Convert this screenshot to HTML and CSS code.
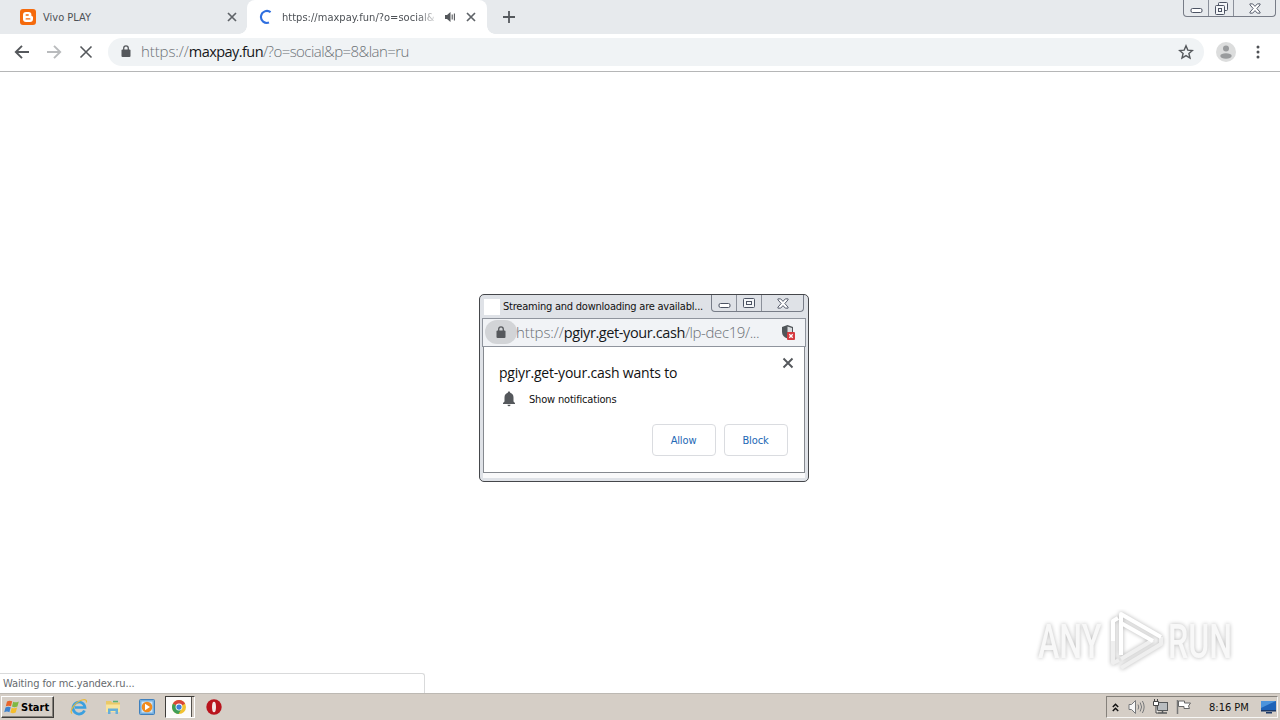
FILE: index.html
```html
<!DOCTYPE html>
<html lang="en">
<head>
    <meta charset="UTF-8">
    <meta name="viewport" content="width=device-width, initial-scale=1.0">
    <title>https://maxpay.fun/?o=social&amp;p=8&amp;lan=ru</title>
    <link rel="stylesheet" href="styles.css">
</head>
<body>
    <div class="tab-strip">
        <div class="tab">
            <svg class="favicon" width="16" height="16" viewBox="0 0 16 16">
                <rect width="16" height="16" rx="3" fill="#f56a0c"/>
                <path d="M6 3h2.7a2.7 2.7 0 0 1 2.7 2.7v.8c0 .5.3.7.8.7.5 0 .8.3.8.8v2A3 3 0 0 1 10 13H6a3 3 0 0 1-3-3V6a3 3 0 0 1 3-3z" fill="#fff"/>
                <path d="M6.2 6h2M6.2 9.9h3.6" stroke="#f56a0c" stroke-width="1.4" stroke-linecap="round"/>
            </svg>
            <span class="tab-title">Vivo PLAY</span>
            <svg class="tab-close" width="10" height="10" viewBox="0 0 10 10"><path d="M1 1l8 8M9 1L1 9" stroke="#5f6368" stroke-width="1.7"/></svg>
        </div>
        <div class="tab active">
            <svg class="favicon" width="16" height="16" viewBox="0 0 16 16">
                <path d="M12.6 3.2A6 6 0 1 0 11 13.6" fill="none" stroke="#2f6fdf" stroke-width="2.1"/>
            </svg>
            <span class="tab-title loading">https://maxpay.fun/?o=social&amp;</span>
            <svg class="audio" width="12" height="12" viewBox="0 0 12 12">
                <path d="M1 4h2l3.5-3v10L3 8H1z" fill="#55585c"/>
                <path d="M8.2 3.5v5M10.4 2.5v7" stroke="#55585c" stroke-width="1.1"/>
            </svg>
            <svg class="tab-close" width="10" height="10" viewBox="0 0 10 10"><path d="M1 1l8 8M9 1L1 9" stroke="#5f6368" stroke-width="1.7"/></svg>
        </div>
        <svg class="new-tab" width="12" height="12" viewBox="0 0 12 12"><path d="M6 0v12M0 6h12" stroke="#55595d" stroke-width="1.8"/></svg>
        <div class="caption-buttons">
            <span class="min"><svg width="13" height="6" viewBox="0 0 13 6"><rect x="1" y=".5" width="11" height="4" rx="1.5" fill="#fff" stroke="#4c5363"/></svg></span>
            <span class="max"><svg width="13" height="13" viewBox="0 0 13 13" fill="#f4f6f8" stroke="#4c5363"><rect x="3.5" y=".5" width="9" height="8" rx="1"/><rect x=".5" y="3.5" width="9" height="9" rx="1"/><rect x="3.5" y="6.5" width="3" height="3"/></svg></span>
            <span class="close"><svg width="12" height="11" viewBox="0 0 13 11"><path d="M1 .5h3l2.5 2.7L9 .5h3v1L8.5 5.5 12 9.5v1H9L6.5 7.8 4 10.5H1v-1l3.5-4L1 1.5z" fill="#fff" stroke="#4c5363"/></svg></span>
        </div>
    </div>

    <div class="toolbar">
        <svg width="16" height="16" viewBox="0 0 16 16"><path d="M15 8H2M8 1.8L1.8 8 8 14.2" fill="none" stroke="#55585c" stroke-width="1.9"/></svg>
        <svg width="16" height="16" viewBox="0 0 16 16"><path d="M1 8h13M8 1.8L14.2 8 8 14.2" fill="none" stroke="#b9bbbd" stroke-width="1.9"/></svg>
        <svg width="16" height="16" viewBox="0 0 16 16"><path d="M2.5 2.5l11 11M13.5 2.5l-11 11" stroke="#55585c" stroke-width="1.6"/></svg>
        <div class="omnibox">
            <svg class="lock" width="10" height="13" viewBox="0 0 10 13"><rect x=".5" y="4.5" width="9" height="7.5" rx="1" fill="#55585c"/><path d="M2.7 5V3.2a2.3 2.3 0 0 1 4.6 0V5" fill="none" stroke="#55585c" stroke-width="1.3"/></svg>
            <span class="url main-url">https://<b>maxpay.fun</b><span class="path">/?o=social&amp;p=8&amp;lan=ru</span></span>
            <svg class="star" width="16" height="16" viewBox="0 0 16 16"><path d="M8 1.8l1.8 4.3 4.6.4-3.5 3 1.1 4.5L8 11.6 4 14l1.100-4.500-3.500-3 4.600-.4z" fill="none" stroke="#55585c" stroke-width="1.4"/></svg>
        </div>
        <svg class="avatar" width="20" height="20" viewBox="0 0 20 20"><circle cx="10" cy="10" r="10" fill="#dcdddd"/><circle cx="10" cy="6.5" r="3" fill="#999b9d"/><ellipse cx="10" cy="14" rx="5.7" ry="2.7" fill="#999b9d"/></svg>
        <svg class="menu" width="4" height="14" viewBox="0 0 4 14" fill="#4e5155"><circle cx="2" cy="2" r="1.5"/><circle cx="2" cy="7" r="1.5"/><circle cx="2" cy="12" r="1.5"/></svg>
    </div>

    <div class="page">
        <div class="popup">
            <div class="popup-title">
                <span class="blank-icon"></span>
                <span class="popup-name">Streaming and downloading are availabl...</span>
                <div class="caption-buttons">
                    <span class="min"><svg width="13" height="6" viewBox="0 0 13 6"><rect x="1" y=".5" width="11" height="4" rx="1.5" fill="#fff" stroke="#4c5363"/></svg></span>
                    <span class="max"><svg width="12" height="10" viewBox="0 0 12 10" fill="#f4f6f8" stroke="#4c5363"><rect x=".5" y=".5" width="11" height="9" rx="1"/><rect x="3.5" y="3.5" width="5" height="3"/></svg></span>
                    <span class="close"><svg width="12" height="11" viewBox="0 0 13 11"><path d="M1 .5h3l2.5 2.7L9 .5h3v1L8.5 5.5 12 9.5v1H9L6.5 7.8 4 10.5H1v-1l3.5-4L1 1.5z" fill="#fff" stroke="#4c5363"/></svg></span>
                </div>
            </div>
            <div class="popup-bar">
                <span class="lock-chip"><svg width="10" height="13" viewBox="0 0 10 13"><rect x=".5" y="4.5" width="9" height="7.5" rx="1" fill="#55585c"/><path d="M2.7 5V3.2a2.3 2.3 0 0 1 4.6 0V5" fill="none" stroke="#55585c" stroke-width="1.3"/></svg></span>
                <span class="url popup-url">https://<b>pgiyr.get-your.cash</b><span class="path">/lp-dec19/...</span></span>
                <svg class="shield" width="14" height="15" viewBox="0 0 14 15">
                    <path d="M6.5 0L12 2v5c0 3-2.500 5.500-5.500 6.500C3 12.500 1 10 1 7V2z" fill="#505559"/>
                    <path d="M6.500 1.500L11 3v4H6.500z" fill="#d9dcdf"/>
                    <rect x="6" y="7" width="8" height="8" rx="1" fill="#d63a40"/>
                    <path d="M8.300 9.300l3.400 3.400M11.700 9.300l-3.400 3.400" stroke="#fff" stroke-width="1.3"/>
                </svg>
            </div>
            <div class="prompt">
                <div class="prompt-head">
                    <span class="prompt-title">pgiyr.get-your.cash wants to</span>
                    <svg width="12" height="12" viewBox="0 0 12 12"><path d="M1.5 1.5l9 9M10.5 1.5l-9 9" stroke="#55585c" stroke-width="1.9"/></svg>
                </div>
                <div class="permission">
                    <svg width="14" height="16" viewBox="0 0 14 16"><path d="M7 .5c.8 0 1.2.5 1.2 1.3C10.4 2.4 11.5 4.3 11.5 6.5v4L13 12v1H1v-1l1.5-1.5v-4c0-2.2 1.1-4.1 3.3-4.7C5.8 1 6.2.5 7 .5zM5.5 13.8h3a1.5 1.5 0 0 1-3 0z" fill="#55585c"/></svg>
                    <span class="permission-name">Show notifications</span>
                </div>
                <div class="prompt-buttons">
                    <button class="allow">Allow</button>
                    <button class="block">Block</button>
                </div>
            </div>
        </div>

        <div class="watermark">
            <span class="any">ANY</span>
            <svg width="60" height="64" viewBox="0 0 60 64" fill="none" stroke-linejoin="round">
                <g class="arrow">
                    <path class="shade" d="M6 30v24l6-3M14 59l40-24v-7M14 50l32-19"/>
                    <path d="M6 32V12l5-3M14 46V5l40 23M14 14l32 18"/>
                </g>
            </svg>
            <span class="run">RUN</span>
        </div>

        <div class="status"><span>Waiting for mc.yandex.ru...</span></div>
    </div>

    <div class="taskbar">
        <div class="start">
            <svg width="17" height="16" viewBox="0 0 17 16">
                <path d="M3 2.5c2-1.2 3.5-1 5.2-.2L7 7.3c-1.7-.8-3.3-.8-5.2 0z" fill="#e8652b"/>
                <path d="M9.2 2.7c1.8.8 3.5.8 5.6-.3l-1.4 5c-1.9 1-3.6 1-5.4.2z" fill="#7fb842"/>
                <path d="M1.5 8.4c1.9-.9 3.5-.9 5.2-.1l-1.3 4.9c-1.6-.8-3.3-.8-5.2.1z" fill="#3d82ce"/>
                <path d="M7.7 8.7c1.8.8 3.5.8 5.4-.2l-1.4 5c-1.9 1-3.5 1-5.3.1z" fill="#f4bd2c"/>
            </svg>
            <span>Start</span>
        </div>
        <div class="launch">
            <svg class="ie" width="18" height="18" viewBox="0 0 18 18">
                <path d="M14.5 12.5A6 6 0 1 1 15 9.5H5" fill="none" stroke="#3ba0df" stroke-width="2.7"/>
                <path d="M2 15.5C-1 13 5 4 12 2c3.5-1 5 0 4.3 2.5" fill="none" stroke="#e8b93a" stroke-width="1.2"/>
            </svg>
            <svg class="folder" width="16" height="16" viewBox="0 0 16 16">
                <path d="M1 2h5l1 1.5h8V13H1z" fill="#eac967"/><path d="M1 5.5h14V13H1z" fill="#f8e49d"/>
                <path d="M3 15V9.5h10V15h-2.5v-3h-5v3z" fill="#67afd9"/><path d="M8 2.5h5" stroke="#5ab175" stroke-width="1.5"/>
            </svg>
            <svg class="player" width="16" height="16" viewBox="0 0 16 16">
                <rect x=".5" y=".5" width="15" height="15" rx="1" fill="#75afdf" stroke="#3f80bd"/><rect x="2.5" y="2.5" width="11" height="11" fill="#cce3f5"/>
                <circle cx="8" cy="8" r="5.3" fill="#f18b1c"/><path d="M6 4.8v6.4L11 8z" fill="#fff"/>
            </svg>
            <span class="running">
                <svg width="14" height="14" viewBox="0 0 16 16">
                    <circle cx="8" cy="8" r="8" fill="#f2c230"/><path d="M8 8L1 4.2A8 8 0 0 1 15 4.2z" fill="#d8463a"/><path d="M1 4.2A8 8 0 0 0 7.5 16L11 9.7 8 8z" fill="#3f9e57"/>
                    <circle cx="8" cy="8" r="3.9" fill="#fff"/><circle cx="8" cy="8" r="3" fill="#3d7fdb"/>
                </svg>
            </span>
            <svg class="opera" width="16" height="16" viewBox="0 0 16 16"><circle cx="8" cy="8" r="7.7" fill="#b9141d"/><ellipse cx="8" cy="8" rx="2" ry="5.3" fill="#f3e6e6"/></svg>
        </div>
        <div class="tray">
            <svg class="chevrons" width="7" height="9" viewBox="0 0 7 9"><path d="M.8 4l2.7-2.7L6.2 4M.8 8l2.7-2.7L6.2 8" fill="none" stroke="#111" stroke-width="1.5"/></svg>
            <svg class="volume" width="17" height="16" viewBox="0 0 17 16" fill="none" stroke="#77797b"><path d="M1 5.5h2.5l4-4v13l-4-4H1z" fill="#f7f7f7"/><path d="M10 5.5q1.5 2.5 0 5M12.2 3.5q2.8 4.5 0 9M14.4 2q3.5 6 0 12"/></svg>
            <svg class="network" width="17" height="16" viewBox="0 0 17 16"><rect x="5.5" y="3.5" width="10" height="8" fill="#b9bdc0" stroke="#55585a"/><path d="M6 14h9M10.5 12v2" stroke="#55585a" stroke-width="1.5"/><path d="M1.5 2.5h5v4h-5zM2.5 0v2.5M5.5 0v2.5M4 6.5V14h2" fill="#fff" stroke="#444"/></svg>
            <svg class="flag" width="17" height="16" viewBox="0 0 17 16"><path d="M1.5 1v14" stroke="#777" stroke-width="1.5"/><path d="M2.5 2h6v2h6l-2 3 1 2.5H8v-2H2.5z" fill="#fff" stroke="#666"/></svg>
            <span class="clock">8:16 PM</span>
            <svg class="desktop" width="16" height="14" viewBox="0 0 16 14"><path d="M0 1h15v9.5H0z" fill="#1e63b8"/><path d="M0 1h15L0 8z" fill="#4c94dc"/><path d="M0 10h15v1.5H0zM5 12h6v1.5H5z" fill="#1b3968"/></svg>
        </div>
    </div>
</body>
</html>
```
FILE: styles.css
```css
* {
    box-sizing: border-box;
}
body {
    margin: 0;
    width: 1280px;
    height: 720px;
    overflow: hidden;
    display: flex;
    flex-direction: column;
    background-color: #fff;
    color: #111;
    font-family: "DejaVu Sans Condensed", "DejaVu Sans", sans-serif;
    font-size: 11px;
    white-space: nowrap;
}
svg {
    display: block;
    flex: none;
}
.tab-strip {
    height: 34px;
    display: flex;
    align-items: flex-start;
    background-color: #e7eaed;
}
.tab {
    width: 247px;
    height: 34px;
    padding: 0 10px 0 20px;
    display: flex;
    align-items: center;
    color: #4d5156;
}
.tab.active {
    position: relative;
    width: 240px;
    padding: 0 11px;
    background-color: #fff;
    border-radius: 8px 8px 0 0;
}
.tab.active::before,
.tab.active::after {
    content: "";
    position: absolute;
    bottom: 0;
    width: 8px;
    height: 8px;
}
.tab.active::before {
    left: -8px;
    background: radial-gradient(circle at 0 0, transparent 7.5px, #fff 8px);
}
.tab.active::after {
    right: -8px;
    background: radial-gradient(circle at 100% 0, transparent 7.5px, #fff 8px);
}
.tab-title {
    margin-left: 7px;
}
.tab-title.loading {
    width: 154px;
    margin-left: 8px;
    letter-spacing: 0.03px;
    -webkit-mask-image: linear-gradient(to right, #000 88%, transparent 102%);
    mask-image: linear-gradient(to right, #000 88%, transparent 102%);
}
.tab-close {
    margin-left: auto;
}
.audio {
    margin-left: 8px;
}
.new-tab {
    margin: 11px 0 0 16px;
}
.caption-buttons {
    height: 17px;
    margin: 0 4px 0 auto;
    display: flex;
    border: 1px solid #777c87;
    border-top: none;
    border-radius: 0 0 4px 4px;
}
.caption-buttons span {
    width: 25px;
    display: flex;
    align-items: center;
    justify-content: center;
    border-right: 1px solid #8b909a;
}
.caption-buttons .min {
    padding-top: 5px;
}
.caption-buttons .close {
    width: 41px;
    border-right: none;
}
.toolbar {
    height: 38px;
    padding: 0 16px 2px 14px;
    display: flex;
    align-items: center;
    gap: 16px;
    border-bottom: 1px solid #b5b6b7;
}
.omnibox {
    width: 1096px;
    height: 28px;
    margin-left: -2px;
    padding: 0 10px 0 13px;
    display: flex;
    align-items: center;
    border-radius: 14px;
    background-color: #f0f3f5;
}
.url {
    padding-bottom: 1px;
    font-family: "Open Sans", sans-serif;
    font-weight: 300;
    font-size: 15px;
    letter-spacing: -0.1px;
    color: #6c7176;
}
.url b {
    font-weight: 400;
    font-size: 14.5px;
    letter-spacing: -0.55px;
    color: #15171a;
}
.url .path {
    letter-spacing: -0.55px;
}
.main-url {
    margin-left: 10px;
}
.star {
    margin-left: auto;
}
.avatar {
    margin-left: -4px;
}
.page {
    flex: 1;
    position: relative;
}
.popup {
    position: absolute;
    left: 479px;
    top: 222px;
    width: 330px;
    height: 188px;
    padding: 0 3px;
    border: 1px solid #45474b;
    border-radius: 5px;
    background-color: #dfe2e7;
}
.popup-title {
    height: 23px;
    display: flex;
    align-items: center;
}
.blank-icon {
    width: 16px;
    height: 16px;
    margin-left: 1px;
    flex: none;
    background-color: #fff;
}
.popup-name {
    margin-left: 3px;
    letter-spacing: -0.23px;
}
.popup-title .caption-buttons {
    align-self: flex-start;
    margin-right: 1px;
}
.popup-bar {
    height: 29px;
    padding: 0 10px 1px 2px;
    margin: 0 -1px;
    display: flex;
    align-items: center;
    border: 1px solid #8f949d;
    background-color: #f1f3f6;
}
.lock-chip {
    width: 32px;
    height: 24px;
    display: flex;
    align-items: center;
    justify-content: center;
    border-radius: 12px;
    background-color: #d2d4d7;
}
.popup-url {
    margin-left: -1px;
    padding-bottom: 1px;
}
.popup-url b {
    letter-spacing: -0.4px;
}
.popup-url .path {
    letter-spacing: -0.4px;
}
.shield {
    margin-left: auto;
}
.prompt {
    height: 126px;
    padding: 8px 16px 0 15px;
    border: 1px solid #85898f;
    border-top: none;
    background-color: #fff;
    box-shadow: 0 5px 0 #f9f9fa;
}
.prompt-head {
    display: flex;
    height: 35px;
    align-items: center;
}
.prompt-head svg {
    margin: -19px -6px 0 auto;
}
.prompt-title {
    font-family: "Open Sans", sans-serif;
    font-size: 14px;
    letter-spacing: -0.2px;
}
.permission {
    height: 18px;
    display: flex;
    align-items: center;
    padding-left: 3px;
}
.permission-name {
    margin-left: 13px;
    letter-spacing: -0.18px;
}
.prompt-buttons {
    margin-top: 16px;
    display: flex;
    justify-content: flex-end;
    gap: 8px;
}
button {
    width: 64px;
    height: 32px;
    padding: 0 1px 0 0;
    border: 1px solid #dadce0;
    border-radius: 4px;
    background-color: #fff;
    color: #2268b5;
    font-family: inherit;
    font-size: 11px;
    letter-spacing: -0.15px;
}
.watermark {
    position: absolute;
    left: 1038px;
    top: 537px;
    display: flex;
    align-items: center;
    color: #f8f8f8;
    font-family: Roboto, sans-serif;
    font-size: 48px;
    font-weight: 500;
    text-shadow: 0 0 5px #b8b8b8;
}
.watermark span {
    width: 66px;
    transform: scaleX(0.67);
    transform-origin: left;
}
.watermark svg {
    margin-left: 3px;
}
.watermark .run {
    margin-left: 1px;
}
.arrow {
    stroke: #fff;
    stroke-width: 4;
    filter: drop-shadow(0 0 2px #b4b4b4);
}
.arrow .shade {
    stroke: #efefef;
}
.status {
    position: absolute;
    left: 0;
    bottom: 0;
    width: 425px;
    height: 20px;
    padding-left: 3px;
    line-height: 19px;
    letter-spacing: -0.1px;
    border: 1px solid #d9dadb;
    border-left: none;
    border-bottom: none;
    border-top-right-radius: 3px;
    background-color: #fff;
    color: #666a6e;
}
.taskbar {
    height: 27px;
    display: flex;
    align-items: center;
    padding: 0 2px 0 1px;
    border-top: 1px solid #bdb9b3;
    background-color: #d5cec6;
}
.start {
    width: 53px;
    height: 22px;
    padding-left: 2px;
    display: flex;
    align-items: center;
    border: 1px solid;
    border-color: #fff #3f3d3a #3f3d3a #fff;
    box-shadow: inset -1px -1px 0 #85817b;
    color: #000;
    font-weight: bold;
}
.launch {
    display: flex;
    align-items: center;
    margin-left: 16px;
}
.folder {
    margin-left: 17px;
}
.player {
    margin-left: 18px;
}
.running {
    width: 30px;
    height: 22px;
    margin-left: 10px;
    padding-right: 2px;
    display: flex;
    align-items: center;
    justify-content: center;
    border: 1px solid;
    border-color: #3f3d3a #fff #fff #3f3d3a;
    background-color: #fcfbfa;
    box-shadow: inset -2px 0 0 #d5cec6, inset -3px 0 0 #55524e;
}
.opera {
    margin-left: 11px;
}
.tray {
    width: 172px;
    height: 22px;
    margin-left: auto;
    padding-left: 5px;
    display: flex;
    align-items: center;
    border: 1px solid;
    border-color: #85817b #f7f6f4 #f7f6f4 #85817b;
}
.volume {
    margin-left: 9px;
}
.network, .flag {
    margin-left: 7px;
}
.clock {
    margin-left: 16px;
}
.desktop {
    margin-left: auto;
}
.menu {
    margin-left: 4px;
}
```
